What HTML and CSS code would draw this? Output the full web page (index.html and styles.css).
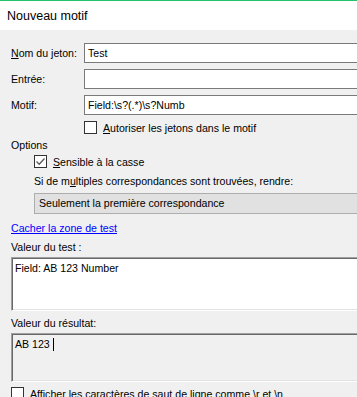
FILE: index.html
```html
<!DOCTYPE html>
<html lang="fr">
<head>
    <meta charset="UTF-8">
    <title>Nouveau motif</title>
    <link rel="stylesheet" href="styles.css">
</head>
<body>
    <div class="titlebar">Nouveau motif</div>

    <div class="dialog">
        <div class="field-row">
            <label class="field-label"><u>N</u>om du jeton:</label>
            <div class="textbox">Test</div>
        </div>
        <div class="field-row">
            <label class="field-label">Entrée:</label>
            <div class="textbox"></div>
        </div>
        <div class="field-row">
            <label class="field-label">Motif:</label>
            <div class="textbox">Field:\s?(.*)\s?Numb</div>
        </div>
        <div class="check-row indent-field">
            <span class="checkbox"></span>
            <span><u>A</u>utoriser les jetons dans le motif</span>
        </div>

        <div class="group-title">Options</div>
        <div class="check-row indent-option sensible">
            <span class="checkbox">
                <svg width="11" height="11" viewBox="0 0 11 11"><polyline points="1.5,5.5 4.2,8.2 9.5,2.5" fill="none" stroke="#5a5a5a" stroke-width="1.3"/></svg>
            </span>
            <span><u>S</u>ensible à la casse</span>
        </div>
        <div class="plain-label indent-option multi">Si de m<u>u</u>ltiples correspondances sont trouvées, rendre:</div>
        <div class="dropdown indent-option">Seulement la première correspondance</div>

        <a class="toggle-link" href="#">Cacher la zone de test</a>

        <div class="plain-label test-label">Valeur du test :</div>
        <div class="memo memo-test">Field: AB 123 Number</div>

        <div class="plain-label result-label">Valeur du résultat:</div>
        <div class="memo memo-result">AB 123 <span class="caret"></span></div>

        <div class="check-row bottom-check">
            <span class="checkbox"></span>
            <span>Afficher les caractères de saut de ligne comme \r et \n</span>
        </div>
    </div>
</body>
</html>
```

FILE: styles.css
```css
body {
    margin: 0;
    padding: 0;
    width: 357px;
    height: 397px;
    overflow: hidden;
    background-color: #f0f0f0;
    font-family: 'Liberation Sans', Arial, sans-serif;
    font-size: 10.6px;
    color: #000;
}

.titlebar {
    height: 29px;
    border-top: 1px solid #22c36b;
    background-color: #fff;
    padding-left: 7px;
    font-size: 12.5px;
    line-height: 30px;
}

.dialog {
    width: 400px;
    padding: 13px 0 0 11px;
}

.field-row {
    display: flex;
    align-items: center;
    height: 20px;
    margin-bottom: 6px;
}

.field-label {
    width: 73px;
}

.textbox {
    flex: 1;
    height: 18px;
    border: 1px solid #7a7a7a;
    background-color: #fff;
    padding-left: 3px;
    line-height: 18px;
}

.check-row {
    display: flex;
    align-items: center;
    gap: 6px;
    height: 13px;
}

.indent-field {
    margin-left: 73px;
}

.indent-option {
    margin-left: 23px;
}

.checkbox {
    width: 11px;
    height: 11px;
    border: 1px solid #333;
    background-color: #fff;
    display: flex;
    align-items: center;
    justify-content: center;
}

.group-title {
    margin-top: 5px;
    line-height: 13px;
}

.sensible {
    margin-top: 3px;
}

.plain-label {
    line-height: 13px;
}

.multi {
    margin-top: 7px;
}

.dropdown {
    margin-top: 5px;
    height: 19px;
    border: 1px solid #adadad;
    background-color: #e1e1e1;
    padding-left: 4px;
    line-height: 19px;
}

.toggle-link {
    display: block;
    margin-top: 8px;
    line-height: 13px;
    color: #0000ff;
    width: max-content;
}

.test-label {
    margin-top: 6px;
}

.memo {
    margin-top: 3px;
    border: 1px solid;
    border-color: #a0a0a0 #fff #fff #a0a0a0;
    box-shadow: inset 1px 1px 0 #696969, inset -1px -1px 0 #e3e3e3;
    padding: 4px 3px;
    line-height: 13px;
    box-sizing: border-box;
}

.memo-test {
    height: 54px;
    background-color: #fff;
}

.memo-result {
    height: 49px;
    background-color: #f0f0f0;
}

.result-label {
    margin-top: 6px;
}

.caret {
    display: inline-block;
    width: 1px;
    height: 13px;
    background-color: #000;
    vertical-align: top;
}

.bottom-check {
    margin-top: 5px;
}
```
